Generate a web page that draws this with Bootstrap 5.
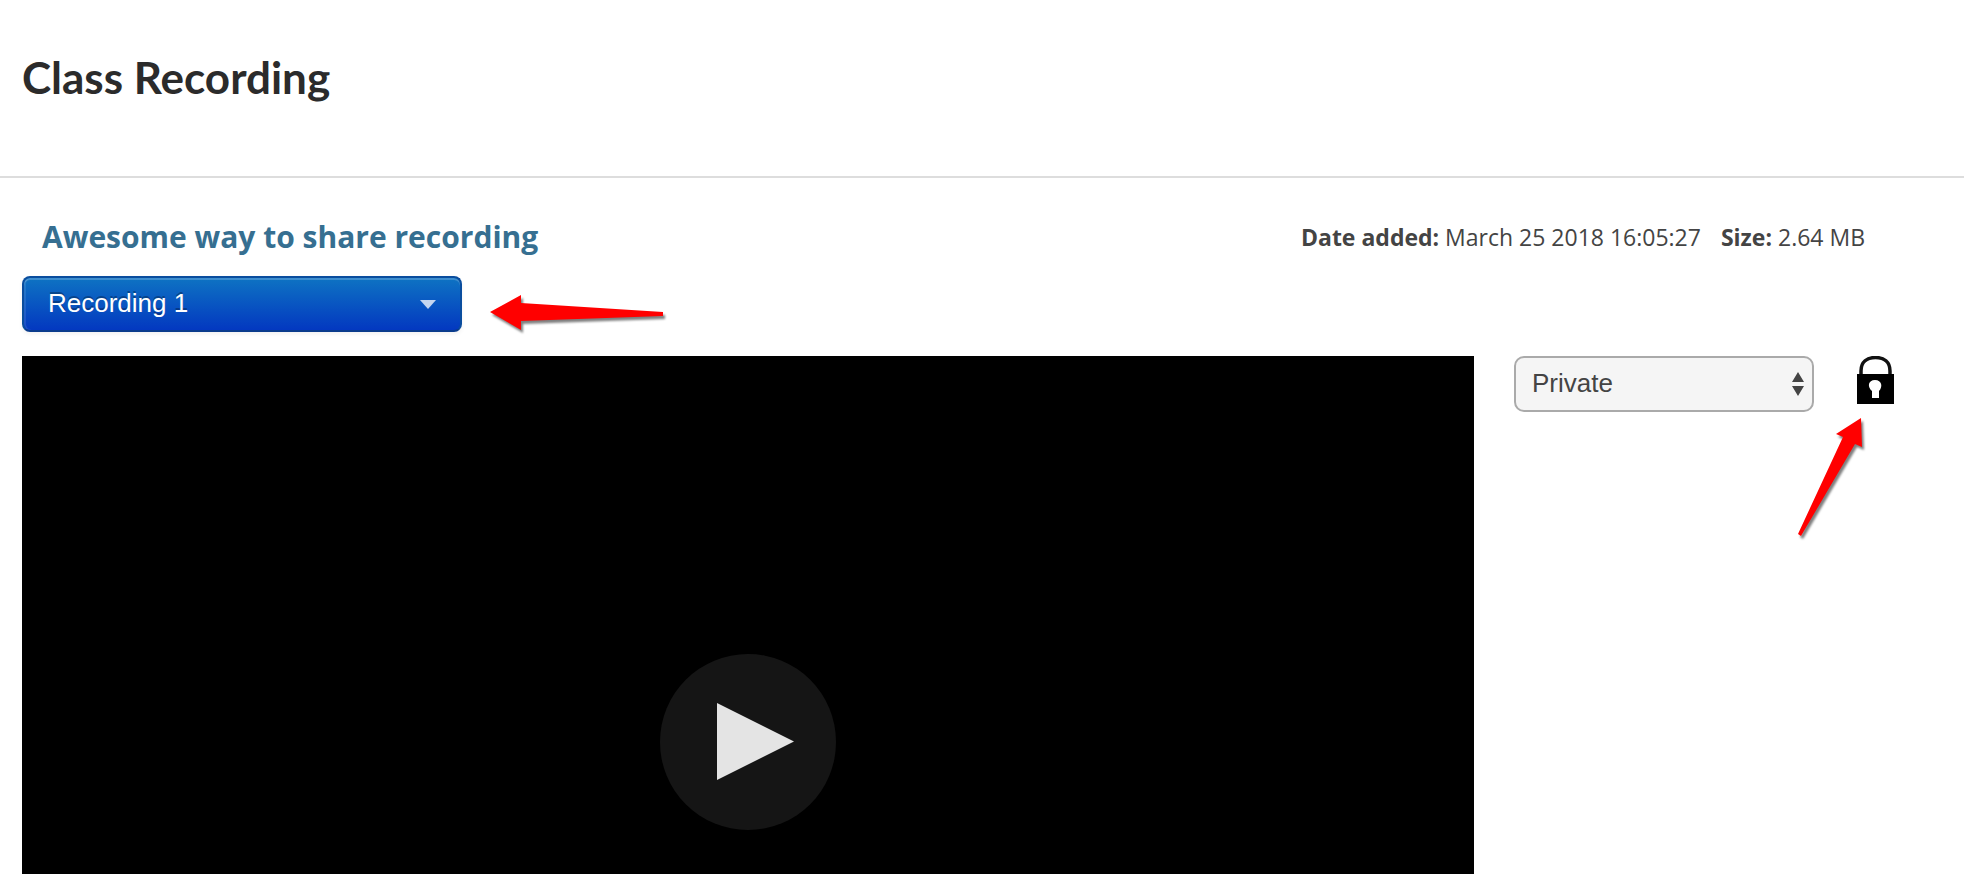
<!DOCTYPE html>
<html lang="en">
<head>
<meta charset="utf-8">
<meta name="viewport" content="width=device-width, initial-scale=1">
<title>Class Recording</title>
<link href="https://cdn.jsdelivr.net/npm/bootstrap@5.3.0/dist/css/bootstrap.min.css" rel="stylesheet">
<style>
  body { font-family: "Liberation Sans", sans-serif; color: #404040; background: #fff; }
  .page-head { padding: 51px 22px 0; height: 178px; border-bottom: 2px solid #ddd; }
  .page-title { font: 700 44px/52px Lato, sans-serif; color: #2b2b2b; }
  .page-main { padding: 34px 22px 0; }
  .info-row { padding: 0 77px 0 20px; height: 50px; }
  .rec-title { font: 700 30px/50px "Open Sans", sans-serif; color: #366f91; }
  .rec-meta { font: 400 23px/50px "Open Sans", sans-serif; color: #444; gap: 20px; }
  .picker-row { gap: 28px; margin: 14px 0 24px; height: 56px; }
  .picker { width: 440px; }
  .pick { appearance: none; width: 100%; height: 56px; font: 400 26px/30px "Liberation Sans", sans-serif; }
  .pick-blue { color: #fff; border: 2px solid #0a4d9e; border-bottom-color: #0a3c8c; border-radius: 8px; padding: 0 24px 2px;
    background: linear-gradient(#0e73c3, #0338c0); text-shadow: 0 -2px 0 rgba(0,0,0,.3);
    box-shadow: inset 0 2px 0 rgba(255,255,255,.2), inset 2px 0 0 rgba(255,255,255,.1), 0 2px 4px rgba(0,0,0,.06); }
  .pick-plain { color: #444; background: #f5f5f5; border: 2px solid #aaa; border-radius: 10px; padding: 0 16px 2px; }
  .pick option { color: #444; text-shadow: none; }
  .caret { pointer-events: none; right: 26px; top: 24px; }
  .steppers { pointer-events: none; right: 10px; top: 16px; }
  .pointer { filter: drop-shadow(2px 3px 1px rgba(0,0,0,.5)); overflow: visible; }
  .video { aspect-ratio: 1452 / 772; background: #000; }
  .play { border: 0; padding: 0; background: none; width: 176px; height: 176px; }
  .side { margin: 0 48px 0 40px; gap: 43px; }
  .privacy { width: 300px; }
  .lock-hint { right: 31px; top: 62px; }
</style>
</head>
<body class="vh-100 overflow-hidden">
<header class="page-head">
  <h1 class="page-title m-0">Class Recording</h1>
</header>
<main class="page-main">
  <div class="info-row d-flex justify-content-between">
    <h2 class="rec-title m-0">Awesome way to share recording</h2>
    <div class="rec-meta d-flex text-nowrap">
      <span><b>Date added:</b> March 25 2018 16:05:27</span>
      <span><b>Size:</b> 2.64 MB</span>
    </div>
  </div>
  <div class="picker-row d-flex">
    <div class="picker position-relative">
      <select aria-label="Recording" class="pick pick-blue d-block"><option>Recording 1</option></select>
      <svg class="caret position-absolute" width="16" height="9" aria-hidden="true"><path d="M0 0H16L8 9Z" fill="#c4d6f0"/></svg>
    </div>
    <svg class="pointer mt-3" width="174" height="40" aria-hidden="true"><path d="M0 20L31 3V11L173 20V24L31 29V38Z" fill="#f00"/></svg>
  </div>
  <div class="d-flex align-items-start">
    <div class="video flex-fill d-flex align-items-center justify-content-center">
      <button class="play" type="button" aria-label="Play">
        <svg class="d-block" width="176" height="176" aria-hidden="true"><circle cx="88" cy="88" r="88" fill="#151515"/><path d="M57 49V126L134 87.500Z" fill="#e4e4e4"/></svg>
      </button>
    </div>
    <div class="side d-flex position-relative">
      <div class="privacy position-relative">
        <select aria-label="Privacy" class="pick pick-plain d-block"><option>Private</option><option>Public</option></select>
        <svg class="steppers position-absolute" width="12" height="24" aria-hidden="true"><path d="M0 10L6 0L12 10ZM0 14H12L6 24Z" fill="#444"/></svg>
      </div>
      <svg width="37" height="48" role="img" aria-label="Locked"><path d="M4 20V15C4 6 10 1.500 18.500 1.500S33 6 33 15V20" fill="none" stroke="#111" stroke-width="3.500"/><path d="M0 18H37V48H0Z"/><path d="M15 42V35C10 31 11 24 18 24S26 31 22 35V42Z" fill="#fff"/></svg>
      <svg class="lock-hint pointer position-absolute" width="65" height="118" aria-hidden="true"><path d="M63 0L38 16L45 19L0 116L3 118L57 26L64 29Z" fill="#f00"/></svg>
    </div>
  </div>
</main>
<script src="https://cdn.jsdelivr.net/npm/bootstrap@5.3.0/dist/js/bootstrap.bundle.min.js"></script>
</body>
</html>
